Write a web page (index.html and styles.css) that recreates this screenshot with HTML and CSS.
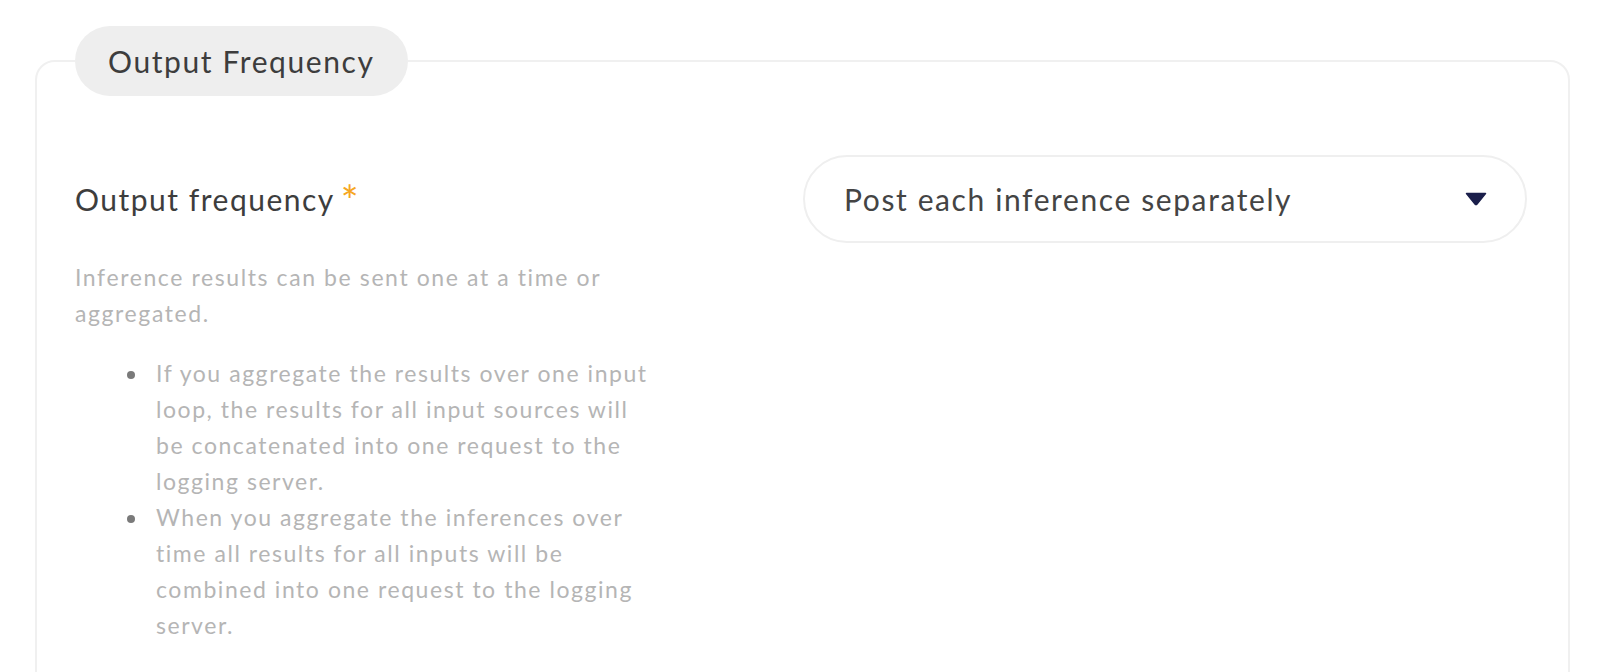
FILE: index.html
```html
<!DOCTYPE html>
<html lang="en">
<head>
<meta charset="utf-8">
<title>Output Frequency</title>
<link rel="stylesheet" href="styles.css">
</head>
<body>
<fieldset class="section">
  <legend class="section-title">Output Frequency</legend>
  <div class="field">
    <div class="field-info">
      <div class="field-label">Output frequency<span class="required">*</span></div>
      <p class="field-desc">Inference results can be sent one at a time or aggregated.</p>
      <ul class="field-list">
        <li>If you aggregate the results over one input loop, the results for all input sources will be concatenated into one request to the logging server.</li>
        <li>When you aggregate the inferences over time all results for all inputs will be combined into one request to the logging server.</li>
      </ul>
    </div>
    <div class="field-control">
      <div class="select">
        <span class="select-value">Post each inference separately</span>
        <svg class="select-arrow" width="22" height="14" viewBox="0 0 22 14"><path d="M1.5 1.5 H20.5 L12 12 Q11 13.2 10 12 Z" fill="#1b1f4b" stroke="#1b1f4b" stroke-width="1.5" stroke-linejoin="round"/></svg>
      </div>
    </div>
  </div>
</fieldset>
</body>
</html>
```
FILE: styles.css
```css
html, body {
  margin: 0;
  background: #ffffff;
}
body {
  padding: 26px 48px 0 35px;
  font-family: "Lato", "Open Sans", sans-serif;
  color: #3d3d3d;
}
.section {
  margin: 0;
  border: 2px solid #f0f0f0;
  border-radius: 20px;
  padding: 59px 41px 40px 38px;
  min-height: 700px;
}
.section-title {
  margin: 0;
  padding: 0 33px 0 33px;
  height: 70px;
  line-height: 70px;
  border-radius: 35px;
  background: #eeeeee;
  font-size: 30px;
  letter-spacing: 1.6px;
  color: #3d3d3d;
}
.field {
  display: grid;
  grid-template-columns: 1fr 1fr;
  column-gap: 4px;
  align-items: start;
}
.field-label {
  height: 88px;
  display: flex;
  align-items: center;
  font-size: 30px;
  letter-spacing: 1.5px;
  color: #3d3d3d;
}
.required {
  color: #f6a623;
  margin-left: 6px;
  font-size: 42px;
  line-height: 1;
  position: relative;
  top: 1px;
}
.field-desc {
  margin: 16px 0 0;
  max-width: 575px;
  font-size: 23px;
  letter-spacing: 1.6px;
  line-height: 36px;
  color: #b5b5b5;
}
.field-list {
  margin: 24px 0 0;
  padding-left: 74px;
  max-width: 510px;
  font-size: 23px;
  letter-spacing: 1.55px;
  line-height: 36px;
  color: #b5b5b5;
}
.field-list li {
  padding-left: 7px;
}
.field-list li::marker {
  color: #7a7a7a;
}
.select {
  height: 88px;
  box-sizing: border-box;
  border: 2px solid #efefef;
  border-radius: 44px;
  display: flex;
  align-items: center;
  justify-content: space-between;
  padding: 0 38px 0 39px;
}
.select-value {
  font-size: 30px;
  letter-spacing: 1.6px;
  color: #444444;
}
.select-arrow {
  display: block;
}
```
